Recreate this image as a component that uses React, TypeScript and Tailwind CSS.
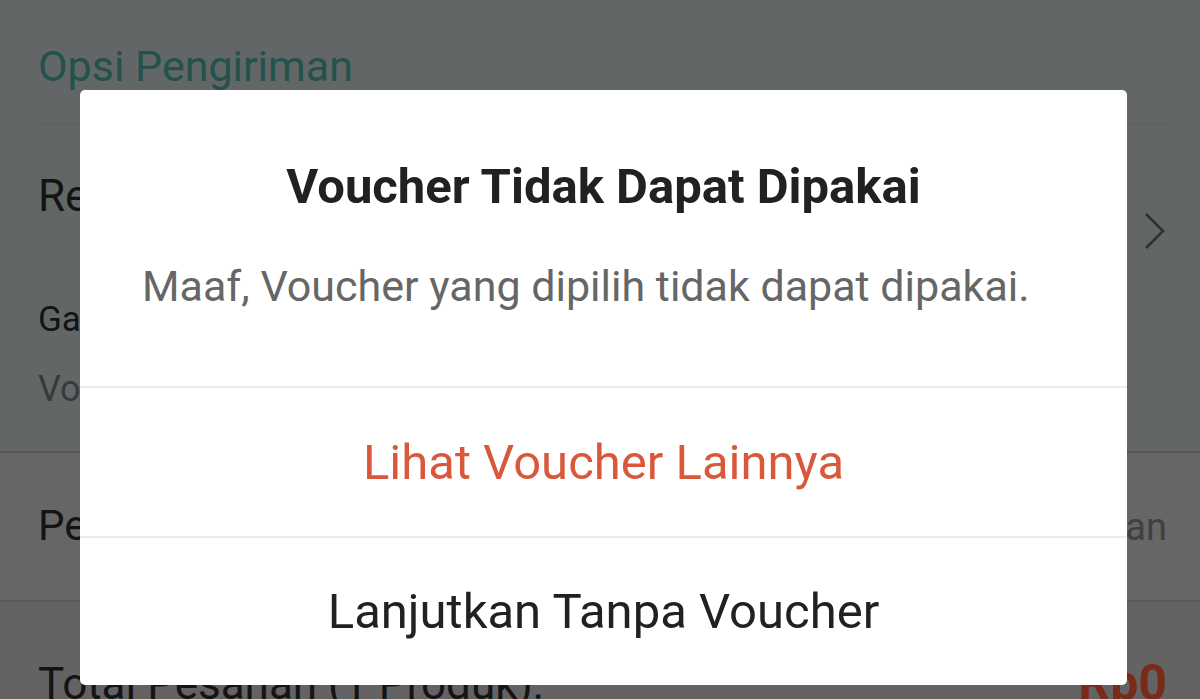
import React from 'react';

// dimmed checkout page behind the voucher dialog

export default function App() {
  return (
    <div className="relative w-[1200px] h-[699px] overflow-hidden bg-[#636363] font-['Roboto',sans-serif]">
      {/* shipping section */}
      <div className="bg-[#636667] h-[453px] px-[38px] border-b-2 border-[#4f5756]">
        <div className="pt-[45px] text-[43px] leading-none text-[#22524a]">Opsi Pengiriman</div>
        <div className="mt-[36px] mr-[-6px] ml-[-2px] h-px bg-[#5c6061]"></div>
        <div className="flex items-center justify-between">
          <div>
            <div className="pt-[49px] text-[44px] leading-none text-[#141414]">Reguler</div>
            <div className="pt-[84px] text-[35px] leading-none text-[#141414]">Garansi</div>
            <div className="pt-[34px] text-[36px] leading-none text-[#383a3a]">Voucher</div>
          </div>
          <svg width="22" height="38" viewBox="0 0 22 38" className="mr-[-4px] mb-[70px]" fill="none">
            <path d="M2 2 L19 19 L2 36" stroke="#2f3131" strokeWidth="2.5" />
          </svg>
        </div>
      </div>
      {/* message section */}
      <div className="bg-[#666666] h-[149px] px-[38px] border-b-2 border-[#595959] flex justify-between">
        <div className="pt-[52px] text-[42px] leading-none text-[#141414]">Pesan:</div>
        <div className="pt-[55px] mr-[-5px] text-[38px] leading-none text-[#404040]">Silakan tinggalkan pesan</div>
      </div>
      {/* total */}
      <div className="px-[38px] flex justify-between">
        <div className="pt-[60px] text-[44px] leading-none text-[#141414]">Total Pesanan (1 Produk):</div>
        <div className="pt-[56px] mr-[-5px] text-[50px] leading-none font-bold text-[#7a2a18]">Rp0</div>
      </div>

      {/* dialog */}
      <div className="absolute inset-0 flex justify-start items-start pt-[90px] pl-[80px]">
        <div className="w-[1047px] bg-white rounded-[5px] flex flex-col">
          <div className="h-[296px]">
            <div className="pt-[72px] text-center text-[49px] leading-none font-bold text-[#212121]">
              Voucher Tidak Dapat Dipakai
            </div>
            <div className="pt-[54px] pl-[62px] text-[43px] leading-none text-[#666666]">
              Maaf, Voucher yang dipilih tidak dapat dipakai.
            </div>
          </div>
          <div className="h-[2px] bg-[#ebebeb]"></div>
          <button className="h-[148px] flex items-center justify-center text-[49px] leading-none text-[#d9583b]">
            Lihat Voucher Lainnya
          </button>
          <div className="h-[2px] bg-[#ebebeb]"></div>
          <button className="h-[147px] flex items-center justify-center text-[49px] leading-none text-[#212121]">
            Lanjutkan Tanpa Voucher
          </button>
        </div>
      </div>
    </div>
  );
}
